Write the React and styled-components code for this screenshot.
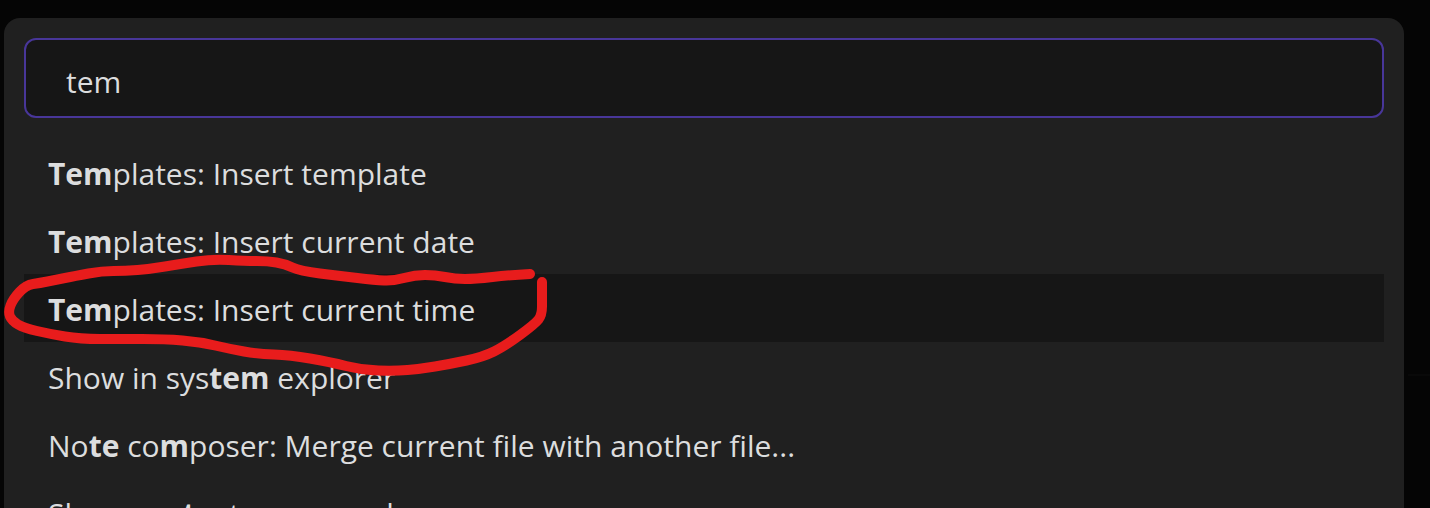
import React, { useState } from "react";
import styled, { createGlobalStyle } from "styled-components";

const GlobalStyle = createGlobalStyle`
  * { box-sizing: border-box; }
  body {
    margin: 0;
    background: #050505;
    color: #dcddde;
    font-family: "Segoe UI", "Open Sans", "Noto Sans", sans-serif;
    font-size: 30px;
  }
`;

const Workspace = styled.main`
  position: relative;
  display: flex;
  height: 100vh;
  overflow: hidden;
  padding: 18px 0 0 4px;
`;

const Palette = styled.section`
  flex: 1;
  min-width: 0;
  align-self: flex-start;
  padding: 20px;
  border-radius: 16px;
  background: #202020;
`;

const SearchInput = styled.input`
  display: block;
  width: 100%;
  height: 80px;
  padding: 6px 40px 0;
  border: 2px solid #483699;
  border-radius: 12px;
  outline: none;
  background: #161616;
  color: inherit;
  font: inherit;
`;

const Results = styled.ul`
  margin: 20px 0 0;
  padding: 0;
  list-style: none;
`;

const Command = styled.button`
  display: block;
  width: 100%;
  padding: 16px 24px 12px;
  border: 0;
  background: ${({ $selected }) => ($selected ? "#161616" : "transparent")};
  color: inherit;
  font: inherit;
  line-height: 40px;
  text-align: left;
  white-space: pre;
`;

const Match = styled.strong`
  font-weight: 700;
`;

const Sidebar = styled.aside`
  display: flex;
  flex-direction: column;
  width: 26px;
  padding-left: 4px;
`;

const Pane = styled.div`
  flex: ${({ $share }) => $share};
  & + & { border-top: 2px solid #090909; }
`;

const Ink = styled.svg`
  position: absolute;
  top: 0;
  left: 0;
  pointer-events: none;
`;

// Odd entries of each label are the matched letters.
const commands = [
  ["", "Tem", "plates: Insert template"],
  ["", "Tem", "plates: Insert current date"],
  ["", "Tem", "plates: Insert current time"],
  ["Show in sys", "tem", " explorer"],
  ["No", "te", " co", "m", "poser: Merge current file with another file..."],
  ["Show con", "te", "xt ", "m", "enu under cursor"],
];

const stroke = [
  [530, 274], [510, 275], [475, 279], [455, 279], [435, 275], [415, 275],
  [393, 281], [375, 280], [340, 276], [300, 271], [285, 264], [268, 261],
  [245, 261], [213, 259], [180, 264], [150, 269], [125, 271], [102, 271],
  [75, 276], [55, 280], [40, 283], [26, 285], [13, 299], [8, 312],
  [12, 321], [24, 328], [50, 334], [80, 339], [120, 339], [165, 339], [200, 342],
  [230, 349], [258, 354], [290, 355], [330, 362], [362, 370], [395, 371],
  [420, 369], [450, 364], [483, 357], [505, 346], [535, 324], [542, 315], [542, 298], [542, 282],
];

function smooth(points) {
  const last = points.length - 1;
  let d = `M${points[0].join(" ")}`;
  for (let i = 1; i < last; i += 1) {
    const [x, y] = points[i];
    const [nx, ny] = points[i + 1];
    d += ` Q${x} ${y} ${(x + nx) / 2} ${(y + ny) / 2}`;
  }
  return `${d} L${points[last].join(" ")}`;
}

export default function App() {
  const [query, setQuery] = useState("tem");
  const [selected, setSelected] = useState(2);

  return (
    <>
      <GlobalStyle />
      <Workspace>
        <Palette aria-label="Command palette">
          <SearchInput
            type="text"
            aria-label="Search commands"
            value={query}
            onChange={(event) => setQuery(event.target.value)}
          />
          <Results>
            {commands.map((parts, index) => (
              <li key={parts.join("")}>
                <Command
                  type="button"
                  $selected={index === selected}
                  onClick={() => setSelected(index)}
                >
                  {parts.map((part, i) => (i % 2 ? <Match key={i}>{part}</Match> : part))}
                </Command>
              </li>
            ))}
          </Results>
        </Palette>
        <Sidebar aria-hidden="true">
          <Pane $share={73} />
          <Pane $share={27} />
        </Sidebar>
        <Ink width="560" height="390" viewBox="0 0 560 390" aria-hidden="true">
          <path
            d={smooth(stroke)}
            fill="none"
            stroke="#e81c1c"
            strokeWidth="10"
            strokeLinecap="round"
            strokeLinejoin="round"
          />
        </Ink>
      </Workspace>
    </>
  );
}
